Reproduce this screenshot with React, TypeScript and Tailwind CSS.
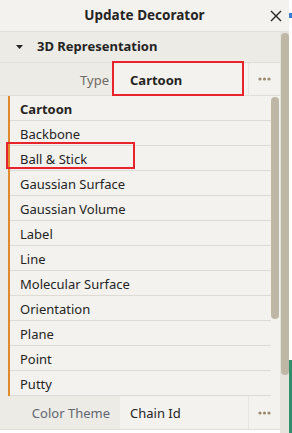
import React from "react";

const items = [
  "Cartoon",
  "Backbone",
  "Ball & Stick",
  "Gaussian Surface",
  "Gaussian Volume",
  "Label",
  "Line",
  "Molecular Surface",
  "Orientation",
  "Plane",
  "Point",
  "Putty",
];

function Dots() {
  return (
    <svg width="13" height="4" viewBox="0 0 13 4">
      <circle cx="2" cy="2" r="1.6" fill="#9c8c6e" />
      <circle cx="6.5" cy="2" r="1.6" fill="#9c8c6e" />
      <circle cx="11" cy="2" r="1.6" fill="#9c8c6e" />
    </svg>
  );
}

export default function App() {
  return (
    <div className="relative w-[292px] h-[433px] overflow-hidden bg-white flex font-['Noto_Sans',sans-serif] text-[#252423]">
      {/* Panel */}
      <div className="w-[289px] h-full flex flex-col bg-[#f3f2ef]">
        {/* Header */}
        <div className="h-[32px] flex items-center justify-center relative border-b border-[#e1dfd9]">
          <span className="text-[13.5px] font-bold">Update Decorator</span>
          <svg className="absolute left-[270px] top-[10px]" width="12" height="12" viewBox="0 0 12 12">
            <path d="M1 1 L11 11 M11 1 L1 11" stroke="#252423" strokeWidth="1.4" />
          </svg>
        </div>

        <div className="flex flex-1 min-h-0">
          <div className="w-[280px] flex flex-col bg-[#ecebe6]">
            {/* Section header */}
            <div className="h-[31px] flex items-center border-b border-[#e0ded8]">
              <svg className="ml-[16px]" width="7" height="5" viewBox="0 0 7 5">
                <path d="M0 0 L7 0 L3.5 4 Z" fill="#252423" />
              </svg>
              <span className="ml-[14px] text-[13px] font-bold">3D Representation</span>
            </div>

            {/* Type row */}
            <div className="h-[33px] flex relative border-b border-[#e0ded8]">
              <div className="w-[112px] flex items-center justify-end pr-[3px] pt-[3px] text-[13px] text-[#6e6a64]">Type</div>
              <div className="flex-1 flex items-center pl-[18px] pt-[3px] bg-[#f3f2ef] text-[13px] font-bold">Cartoon</div>
              <div className="w-[32px] flex items-center justify-center bg-[#f3f2ef] border-l border-[#e6e4de]">
                <Dots />
              </div>
              <div className="absolute left-[112px] top-[-2px] w-[132px] h-[35px] border-2 border-[#e8232b]" />
            </div>

            {/* Dropdown list */}
            <div className="h-[300px] flex ml-[8px] border-l-2 border-[#e08a2e] bg-[#f3f2ef] relative">
              <div className="flex-1 flex flex-col">
                {items.map((it, i) => (
                  <div
                    key={it}
                    className={
                      "h-[25px] flex items-center pl-[10px] pt-[3px] text-[13px] border-b border-[#dedbd4] " +
                      (i === 0 ? "font-bold" : "")
                    }
                  >
                    {it}
                  </div>
                ))}
              </div>
              <div className="w-[9px] pt-[1px] pr-[1px]">
                <div className="w-[8px] h-[222px] rounded-full bg-[#beb7a6]" />
              </div>
              <div className="absolute left-[-4px] top-[46px] w-[129px] h-[27px] border-2 border-[#e8232b]" />
            </div>

            {/* Color Theme row */}
            <div className="h-[34px] flex border-b border-[#e0ded8]">
              <div className="w-[120px] flex items-center justify-end pr-[10px] pt-[3px] text-[13px] text-[#5f6670]">Color Theme</div>
              <div className="flex-1 flex items-center pl-[10px] pt-[3px] bg-[#f3f2ef] text-[13px]">Chain Id</div>
              <div className="w-[32px] flex items-center justify-center bg-[#f3f2ef] border-l border-[#e6e4de]">
                <Dots />
              </div>
            </div>
            <div className="flex-1 bg-white" />
          </div>

          {/* Outer scrollbar */}
          <div className="w-[9px] bg-[#e6e3dd] pt-[1px] pl-[1px]">
            <div className="w-[8px] h-[342px] rounded-full bg-[#beb7a6]" />
          </div>
        </div>
      </div>

      {/* Right edge strip (neighbouring content) */}
      <div className="w-[3px] h-full flex flex-col">
        <div className="h-[13px]" />
        <div className="h-[5px] bg-[#3a7bd5]" />
        <div className="h-[342px]" />
        <div className="flex-1 bg-[#2f8f6c]" />
      </div>
    </div>
  );
}
